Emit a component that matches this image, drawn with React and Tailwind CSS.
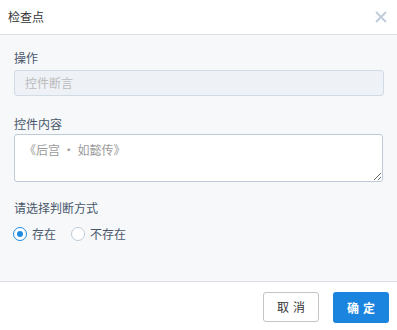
import React from "react";

export default function App() {
  const font = { fontFamily: '"Noto Sans CJK SC", "Noto Sans", sans-serif' };
  return (
    <div className="w-[397px] h-[330px] bg-white flex flex-col" style={font}>
      <div className="h-[35px] shrink-0 flex items-center justify-between pl-[8px] pr-[9px] border-b border-[#dcdfe6]">
        <span className="text-[12px] text-[#333] leading-[16px]">检查点</span>
        <svg width="12" height="12" viewBox="0 0 12 12" className="mr-[1px]">
          <path d="M1 1 L11 11 M11 1 L1 11" stroke="#bfcbd9" strokeWidth="1.8" />
        </svg>
      </div>
      <div className="h-[246px] shrink-0 bg-[#f7f8fa] px-[14px] pt-[15px] flex flex-col">
        <div className="text-[12px] leading-[16px] text-[#48576a] mb-[4px]">操作</div>
        <div className="h-[26px] rounded-[3px] border border-[#d1dbe5] bg-[#eef1f6] flex items-center px-[10px] mr-[-1px] text-[12px] text-[#bbbbbb]">
          控件断言
        </div>
        <div className="text-[12px] leading-[16px] text-[#48576a] mt-[20px] mb-[2px]">控件内容</div>
        <textarea
          className="h-[48px] rounded-[3px] border border-[#bfcbd9] bg-white px-[9px] py-[6px] text-[12px] leading-[18px] text-[#333] placeholder:text-[#9a9a9a] outline-none"
          placeholder="《后宫 • 如懿传》"
          style={{ fontFamily: '"Noto Sans CJK SC", serif' }}
        />
        <div className="text-[12px] leading-[16px] text-[#48576a] mt-[18px] mb-[10px]">请选择判断方式</div>
        <div className="flex items-center h-[16px] text-[12px] text-[#48576a]">
          <span className="w-[14px] h-[14px] rounded-full border border-[#1f8ae0] bg-white flex items-center justify-center ml-[-1px]">
            <span className="w-[6px] h-[6px] rounded-full bg-[#1f8ae0]" />
          </span>
          <span className="ml-[5px]">存在</span>
          <span className="w-[14px] h-[14px] rounded-full border border-[#bfcbd9] bg-white ml-[15px]" />
          <span className="ml-[5px]">不存在</span>
        </div>
      </div>
      <div className="flex-1 border-t border-[#dcdfe6] flex justify-end items-start pt-[10px] pr-[8px] gap-[14px]">
        <button className="w-[56px] h-[30px] rounded-[3px] border border-[#c4c4c4] bg-white text-[12px] text-[#333] tracking-[4px] pl-[4px]">
          取消
        </button>
        <button className="w-[56px] h-[31px] rounded-[3px] bg-[#1b84de] text-white text-[12px] font-bold tracking-[4px] pl-[4px]">
          确定
        </button>
      </div>
    </div>
  );
}
